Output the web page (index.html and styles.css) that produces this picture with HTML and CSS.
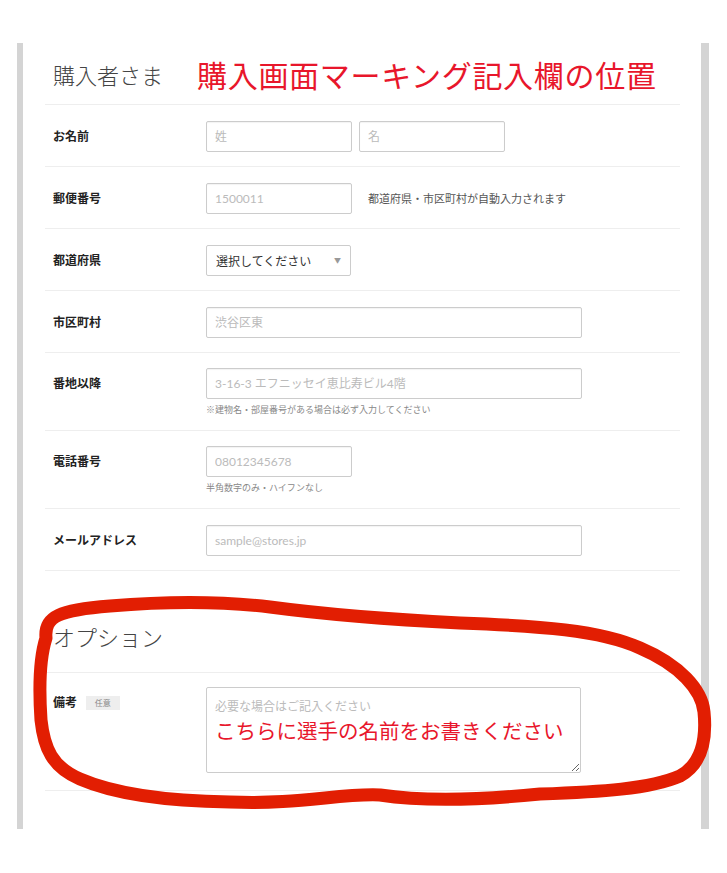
FILE: index.html
```html
<!DOCTYPE html>
<html lang="ja">
<head>
    <meta charset="UTF-8">
    <meta name="viewport" content="width=device-width, initial-scale=1.0">
    <title>購入者さま</title>
    <link rel="stylesheet" href="styles.css">
</head>
<body>
    <div class="sheet">
        <section class="block">
            <div class="block-head">
                <h2 class="block-title">購入者さま</h2>
                <p class="mark-note">購入画面マーキング記入欄の位置</p>
            </div>

            <div class="row">
                <label class="row-label">お名前</label>
                <div class="row-field pair">
                    <input class="text short" type="text" placeholder="姓">
                    <input class="text short" type="text" placeholder="名">
                </div>
            </div>

            <div class="row">
                <label class="row-label" for="zip">郵便番号</label>
                <div class="row-field pair">
                    <input class="text short" id="zip" type="text" placeholder="1500011">
                    <span class="side-note">都道府県・市区町村が自動入力されます</span>
                </div>
            </div>

            <div class="row">
                <label class="row-label" for="pref">都道府県</label>
                <div class="row-field">
                    <div class="select-wrap">
                        <select class="select" id="pref">
                            <option>選択してください</option>
                        </select>
                    </div>
                </div>
            </div>

            <div class="row">
                <label class="row-label" for="city">市区町村</label>
                <div class="row-field">
                    <input class="text long" id="city" type="text" placeholder="渋谷区東">
                </div>
            </div>

            <div class="row with-hint">
                <label class="row-label" for="addr">番地以降</label>
                <div class="row-field">
                    <input class="text long" id="addr" type="text" placeholder="3-16-3 エフニッセイ恵比寿ビル4階">
                    <p class="hint">※建物名・部屋番号がある場合は必ず入力してください</p>
                </div>
            </div>

            <div class="row with-hint">
                <label class="row-label" for="tel">電話番号</label>
                <div class="row-field">
                    <input class="text short" id="tel" type="text" placeholder="08012345678">
                    <p class="hint">半角数字のみ・ハイフンなし</p>
                </div>
            </div>

            <div class="row">
                <label class="row-label" for="mail">メールアドレス</label>
                <div class="row-field">
                    <input class="text long" id="mail" type="text" placeholder="sample@stores.jp">
                </div>
            </div>
        </section>

        <section class="block option">
            <div class="block-head">
                <h2 class="block-title">オプション</h2>
            </div>

            <div class="row">
                <label class="row-label" for="memo">備考 <span class="badge">任意</span></label>
                <div class="row-field memo-wrap">
                    <textarea class="memo" id="memo" placeholder="必要な場合はご記入ください"></textarea>
                    <span class="memo-note">こちらに選手の名前をお書きください</span>
                </div>
            </div>
        </section>
    </div>

    <!-- 手書きの囲み -->
    <svg class="loop" width="727" height="873" viewBox="0 0 727 873">
        <path d="M 46 638 C 44 616, 60 610, 110 606 C 170 601, 220 601, 270 607 C 330 615, 380 619, 460 623 C 540 626, 600 630, 640 648 C 680 665, 702 690, 704 712 C 707 742, 700 765, 680 776 C 650 789, 600 792, 540 794 C 480 800, 420 801, 380 795 C 340 793, 300 805, 230 802 C 160 801, 110 792, 80 779 C 52 767, 44 748, 41 720 C 39 690, 39 660, 46 638 Z"/>
    </svg>
</body>
</html>
```

FILE: styles.css
```css
body {
    margin: 0;
    padding-top: 43px;
    background: #fff;
    font-family: "Noto Sans CJK JP", "Noto Sans", sans-serif;
    color: #333;
}
.sheet {
    width: 692px;
    box-sizing: border-box;
    margin-left: 17px;
    border-left: 6px solid #d4d4d4;
    border-right: 8px solid #d4d4d4;
    padding: 0 21px 38px 22px;
}
.block-head {
    display: flex;
    align-items: center;
    height: 61px;
    padding-left: 8px;
    border-bottom: 1px solid #eee;
}
.block-title {
    margin: 0;
    font-size: 22px;
    font-weight: 300;
    color: #444;
}
.mark-note {
    margin: 0 0 0 34px;
    font-size: 30px;
    letter-spacing: 0.7px;
    color: #e8162b;
    line-height: 1;
}
.option {
    margin-top: 40px;
}
.option .block-title {
    margin-bottom: 12px;
}
.row {
    display: flex;
    padding: 16px 0 14px 8px;
    border-bottom: 1px solid #eee;
}
.row.with-hint {
    padding: 15px 0 14px 8px;
}
.option .row {
    padding: 14px 0 17px 8px;
}
.row-label {
    width: 153px;
    flex-shrink: 0;
    font-size: 12px;
    font-weight: bold;
    line-height: 30px;
    color: #222;
}
.pair {
    display: flex;
    gap: 7px;
}
.text {
    height: 31px;
    box-sizing: border-box;
    border: 1px solid #ccc;
    border-radius: 2px;
    padding: 0 8px;
    font-family: Lato, "Noto Sans CJK JP", sans-serif;
    font-size: 12px;
    box-shadow: inset 0 1px 1px rgba(0, 0, 0, 0.05);
}
.text::placeholder, .memo::placeholder {
    color: #bbb;
}
.short {
    width: 146px;
}
.long {
    width: 376px;
}
.side-note {
    margin-left: 9px;
    font-size: 11px;
    line-height: 31px;
    color: #555;
}
.hint {
    margin: 5px 0 0;
    font-size: 9px;
    line-height: 12px;
    color: #888;
}
.select-wrap {
    position: relative;
    width: 145px;
}
.select {
    appearance: none;
    width: 145px;
    height: 31px;
    border: 1px solid #ccc;
    border-radius: 2px;
    padding: 0 9px;
    background: #fff;
    font-family: "Noto Sans CJK JP", sans-serif;
    font-size: 12px;
    color: #333;
}
.select-wrap::after {
    content: "▼";
    position: absolute;
    right: 10px;
    top: 10px;
    font-size: 7px;
    color: #999;
}
.badge {
    display: inline-block;
    margin-left: 6px;
    padding: 0 9px;
    background: #eee;
    font-size: 8px;
    font-weight: normal;
    line-height: 14px;
    color: #888;
    vertical-align: 1px;
}
.memo-wrap {
    position: relative;
}
.memo {
    display: block;
    width: 375px;
    height: 86px;
    box-sizing: border-box;
    border: 1px solid #ccc;
    border-radius: 2px;
    padding: 9px 8px;
    font-family: "Noto Sans CJK JP", sans-serif;
    font-size: 12px;
}
.memo-note {
    position: absolute;
    left: 9px;
    top: 33px;
    font-size: 20.5px;
    line-height: 1;
    color: #e8162b;
    pointer-events: none;
}
.loop {
    position: absolute;
    top: 0;
    left: 0;
    pointer-events: none;
}
.loop path {
    fill: none;
    stroke: #e21e02;
    stroke-width: 13;
    stroke-linejoin: round;
}
```
